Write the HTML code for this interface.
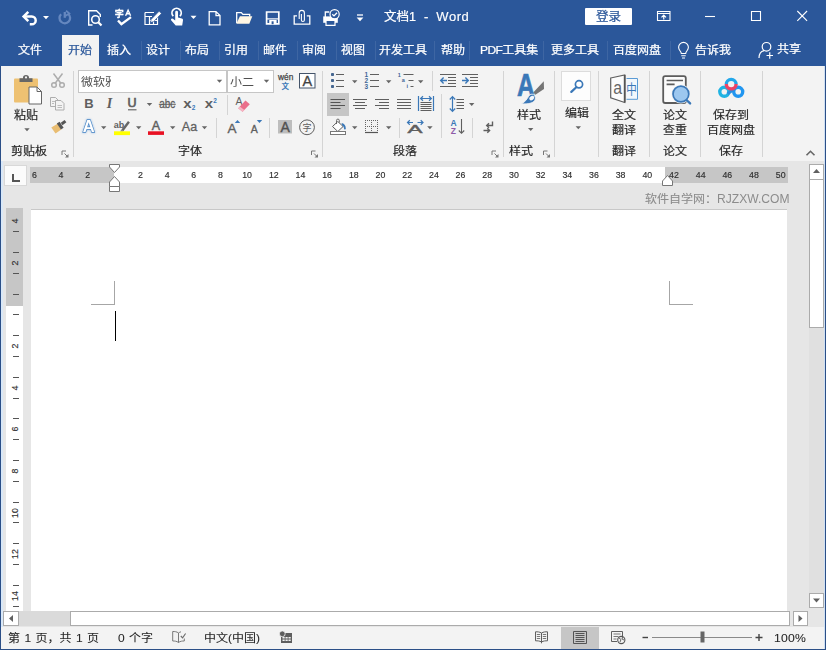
<!DOCTYPE html>
<html lang="zh-CN">
<head>
<meta charset="utf-8">
<title>文档1 - Word</title>
<style>
*{box-sizing:border-box;margin:0;padding:0}
html,body{width:826px;height:650px;overflow:hidden;background:#e6e6e6}
body{font-family:"Liberation Sans","Noto Sans CJK SC",sans-serif;font-size:12px;color:#262626;position:relative}
.a{position:absolute}
.t{position:absolute;white-space:nowrap;line-height:16px;height:16px;-webkit-text-stroke:0.25px;transform:scaleY(0.93)}
svg{position:absolute;overflow:visible}
#title{left:0;top:0;width:826px;height:66px;background:#2b579a}
#title .t{color:#fff;transform:scaleY(0.98)}
#ribbon{left:1px;top:66px;width:824px;height:95px;background:#f3f3f3}
#ribbon .t{color:#262626}
.sep{position:absolute;width:1px;background:#d4d4d4}
#status{left:0;top:627px;width:826px;height:23px;background:#f3f3f3}
#status .t{color:#262626;-webkit-text-stroke:0.08px}
#rl .t{-webkit-text-stroke:0.18px}
.rn{transform:none;-webkit-text-stroke:0.150px;font-size:8.800px;color:#2e2e2e;width:20px;text-align:center;line-height:12px;height:12px}
</style>
</head>
<body>
<!-- ===== TITLE BAR + TABS ===== -->
<div id="title" class="a">
  <div class="t" style="left:384px;top:9.300px;font-size:12.500px">文档1</div>
  <div class="t" style="left:424px;top:9.300px;font-size:13px">-</div>
  <div class="t" style="left:436.300px;top:9.300px;font-size:13px;letter-spacing:0.550px;-webkit-text-stroke:0.150px">Word</div>
  <div class="a" style="left:585px;top:8px;width:47px;height:17px;background:#fff;border-radius:1px"></div>
  <div class="t" style="left:596px;top:9px;font-size:12.5px;color:#2b579a">登录</div>
  <svg width="826" height="66" viewBox="0 0 826 66" style="left:0;top:0" fill="none" stroke="#fff" stroke-width="1.2">
    <!-- undo -->
    <path d="M25 16.500 H31.800 a3.900 3.900 0 0 1 0 7.800 H29.800" stroke-width="2.500"/>
    <path d="M28.300 11.800 L23.600 16.500 L28.300 21.200" stroke-width="2.500"/>
    <path d="M43 16 h6 l-3 3.200z" fill="#fff" stroke="none"/>
    <!-- redo (dim) -->
    <g stroke="#6587bf" stroke-width="2.300"><path d="M68.300 14 a5.300 5.300 0 1 1 -7.200 0.200"/><path d="M64.800 12 v5.800" /><path d="M66 10.800 l3.300 2.600 l-3.600 2.400" stroke-width="1.800"/></g>
    <!-- print preview -->
    <path d="M92.5 25 H88.7 V10.7 H96.5 L100.3 14.5 V17" stroke-width="1.4"/>
    <circle cx="95.5" cy="19.5" r="3.8" stroke-width="1.6"/><path d="M98.3 22.3 L101.5 25.5" stroke-width="2.2"/>
    <!-- spell check -->
    <path d="M118 20.500 l3.400 3.600 l9.600 -7" stroke-width="2.400"/>
    <path d="M125.600 15.800 l2.500 -5.500 l2.500 5.500 M126.600 13.800 h3" stroke-width="1.400"/>
    <!-- table edit -->
    <path d="M145 12.5 h9 M145 12.5 v12 h12.5 v-8 M145 16.5 h7 M149.5 16.5 v8 M153.5 20 v4.5 M149.5 20.5 h8" stroke-width="1.2"/>
    <path d="M151.300 19.300 l7.800 -8 l2.300 2.300 l-7.800 8 l-3.200 1z" fill="#fff" stroke="#2b579a" stroke-width="0.600"/>
    <!-- touch -->
    <path d="M173.300 16.200 a4.600 4.600 0 1 1 6.600 0" stroke-width="1.800"/>
    <path d="M175.2 12.2 a1.4 1.4 0 0 1 2.8 0 v5.3 l3.8 1 a1.6 1.6 0 0 1 1.2 1.8 l-0.8 5.2 h-6.5 l-4.6 -5.3 a1.2 1.2 0 0 1 1.8 -1.5 l2.3 1.8z" fill="#fff" stroke="none"/>
    <path d="M190.5 15.7 h6 l-3 3.2z" fill="#fff" stroke="none"/>
    <!-- new doc -->
    <path d="M209.2 11.6 h6.8 l4 4 v9.2 h-10.8z M216 11.6 v4 h4" stroke-width="1.3"/>
    <!-- open -->
    <path d="M236.7 23 V12.6 h4.6 l1.6 1.8 h6.8 v2.2" stroke-width="1.3"/>
    <path d="M236.300 23.700 l3.600 -7.400 h12.400 l-3 7.400z" fill="#fff6e3" stroke="none"/>
    <!-- save -->
    <path d="M266.600 12 h12.200 v11.800 h-12.200z" stroke-width="1.700"/>
    <path d="M267 18.900 h11.500" stroke-width="1.200"/>
    <path d="M269.200 20 h7.400 v4.200 h-7.400z" fill="#fff" stroke="none"/>
    <path d="M271.600 21.300 h2 v2.900 h-2z" fill="#2b579a" stroke="none"/>
    <!-- attach mail -->
    <path d="M297 15.8 h-2.8 v8.4 h15.6 v-8.4 h-3" stroke-width="1.3"/>
    <path d="M299.2 19 v-6 a2.6 2.6 0 0 1 5.2 0 v7 a1.5 1.5 0 0 1 -3 0 v-6" stroke-width="1.1"/>
    <!-- print check -->
    <path d="M325.3 17 v-5 h4" stroke-width="1.3"/>
    <path d="M323.2 16.4 h14.6 v6.4 h-14.6z" fill="#fff" stroke="none"/>
    <path d="M326 20.3 h9 v5 h-9z" fill="#2b579a" stroke="#fff" stroke-width="1.2"/>
    <circle cx="334.6" cy="14.2" r="4.6" fill="#2b579a" stroke="#fff" stroke-width="1.2"/>
    <path d="M332.3 14.2 l1.7 1.7 l3 -3.2" stroke-width="1.3"/>
    <!-- customize -->
    <path d="M357 15 h6" stroke-width="1.3"/><path d="M356.6 17.6 h6.8 l-3.4 3.6z" fill="#fff" stroke="none"/>
    <!-- window controls -->
    <path d="M657.500 11.500 h12.500 v9 h-12.500z M657.500 13.500 h12.500" stroke-width="1.100"/>
    <path d="M663.750 19.500 v-4 M661.500 17.300 l2.250 -2.300 l2.250 2.300" stroke-width="1.200"/>
    <path d="M705 16.500 h10" stroke-width="1.100"/>
    <path d="M751.500 11.500 h9 v9 h-9z" stroke-width="1.100"/>
    <path d="M797.300 11 l9.800 9.800 M807.100 11 l-9.800 9.800" stroke-width="1.100"/>
    <!-- bulb -->
    <path d="M681.3 53.500 c0 -2.200 -2.700 -3 -2.700 -6.200 a4.900 4.900 0 0 1 9.800 0 c0 3.200 -2.700 4 -2.700 6.200z M681.300 55.800 h4.400 M682 58 h3" stroke-width="1.100"/>
    <!-- share person -->
    <circle cx="766.500" cy="46.800" r="4.300" stroke-width="1.200"/>
    <path d="M759 58 c0 -4.500 2.500 -6.800 5 -7.400" stroke-width="1.200"/>
    <path d="M766.500 55.500 h6.500 M769.750 52.200 v6.600" stroke-width="1.200"/>
  </svg>
  <div class="t" style="left:114.800px;top:9.300px;font-size:9px;font-weight:700;line-height:10px;height:10px;-webkit-text-stroke:0.300px">字</div>
  <!-- tabs -->
  <div class="a" style="left:141px;top:41px;width:1px;height:19px;background:rgba(255,255,255,0.09)"></div><div class="a" style="left:180px;top:41px;width:1px;height:19px;background:rgba(255,255,255,0.09)"></div><div class="a" style="left:219px;top:41px;width:1px;height:19px;background:rgba(255,255,255,0.09)"></div><div class="a" style="left:258px;top:41px;width:1px;height:19px;background:rgba(255,255,255,0.09)"></div><div class="a" style="left:297px;top:41px;width:1px;height:19px;background:rgba(255,255,255,0.09)"></div><div class="a" style="left:336px;top:41px;width:1px;height:19px;background:rgba(255,255,255,0.09)"></div><div class="a" style="left:375px;top:41px;width:1px;height:19px;background:rgba(255,255,255,0.09)"></div><div class="a" style="left:434px;top:41px;width:1px;height:19px;background:rgba(255,255,255,0.09)"></div><div class="a" style="left:469px;top:41px;width:1px;height:19px;background:rgba(255,255,255,0.09)"></div><div class="a" style="left:543px;top:41px;width:1px;height:19px;background:rgba(255,255,255,0.09)"></div><div class="a" style="left:607px;top:41px;width:1px;height:19px;background:rgba(255,255,255,0.09)"></div><div class="a" style="left:670px;top:41px;width:1px;height:19px;background:rgba(255,255,255,0.09)"></div>
  <div class="a" style="left:62px;top:35px;width:37px;height:31px;background:#f3f3f3"></div>
  <div class="t" style="left:18px;top:42px">文件</div>
  <div class="t" style="left:68px;top:42px;color:#2b579a">开始</div>
  <div class="t" style="left:107px;top:42px">插入</div>
  <div class="t" style="left:146px;top:42px">设计</div>
  <div class="t" style="left:185px;top:42px">布局</div>
  <div class="t" style="left:224px;top:42px">引用</div>
  <div class="t" style="left:263px;top:42px">邮件</div>
  <div class="t" style="left:302px;top:42px">审阅</div>
  <div class="t" style="left:341px;top:42px">视图</div>
  <div class="t" style="left:379px;top:42px">开发工具</div>
  <div class="t" style="left:441px;top:42px">帮助</div>
  <div class="t" style="left:480px;top:42px"><span style="letter-spacing:-0.6px">PDF</span>工具集</div>
  <div class="t" style="left:551px;top:42px">更多工具</div>
  <div class="t" style="left:613px;top:42px">百度网盘</div>
  <div class="t" style="left:695px;top:42px">告诉我</div>
  <div class="t" style="left:777px;top:41px">共享</div>
</div>

<!-- ===== RIBBON ===== -->
<div id="ribbon" class="a"></div>
<div class="a" style="left:1px;top:161px;width:824px;height:1px;background:#d6d6d6"></div>
<div id="rl" class="a" style="left:0;top:0;width:826px;height:161px">
  <!-- group separators -->
  <div class="sep" style="left:73px;top:71px;height:86px"></div>
  <div class="sep" style="left:322px;top:71px;height:86px"></div>
  <div class="sep" style="left:503px;top:71px;height:86px"></div>
  <div class="sep" style="left:554px;top:71px;height:86px"></div>
  <div class="sep" style="left:598px;top:71px;height:86px"></div>
  <div class="sep" style="left:649px;top:71px;height:86px"></div>
  <div class="sep" style="left:700px;top:71px;height:86px"></div>
  <div class="sep" style="left:762px;top:71px;height:86px"></div>
  <!-- small separators -->
  <div class="sep" style="left:227px;top:95px;height:20px"></div>
  <div class="sep" style="left:216px;top:118px;height:20px"></div>
  <div class="sep" style="left:269px;top:118px;height:20px"></div>
  <div class="sep" style="left:432px;top:71px;height:20px"></div>
  <div class="sep" style="left:441px;top:94px;height:44px"></div>
  <div class="sep" style="left:399px;top:118px;height:20px"></div>
  <div class="sep" style="left:472px;top:118px;height:20px"></div>
  <!-- font boxes -->
  <div class="a" style="left:78px;top:70px;width:149px;height:23px;background:#fff;border:1px solid #c6c6c6"></div>
  <div class="a" style="left:227px;top:70px;width:47px;height:23px;background:#fff;border:1px solid #c6c6c6"></div>
  <div class="t" style="left:81px;top:74.300px;width:30px;overflow:hidden;color:#505050;-webkit-text-stroke:0">微软雅黑</div>
  <div class="t" style="left:230px;top:74.300px;color:#505050;-webkit-text-stroke:0">小二</div>
  <!-- align-left selected bg -->
  <div class="a" style="left:327px;top:93px;width:22px;height:23px;background:#c6c6c6"></div>
  <!-- edit box -->
  <div class="a" style="left:561px;top:71px;width:30px;height:30px;background:#fdfdfd;border:1px solid #dcdcdc"></div>
  <!-- labels -->
  <div class="t" style="left:14px;top:107.4px">粘贴</div>
  <div class="t" style="left:11px;top:143.4px">剪贴板</div>
  <div class="t" style="left:178px;top:143.4px">字体</div>
  <div class="t" style="left:393px;top:143.4px">段落</div>
  <div class="t" style="left:517px;top:107.4px">样式</div>
  <div class="t" style="left:509px;top:143.4px">样式</div>
  <div class="t" style="left:565px;top:105.4px">编辑</div>
  <div class="t" style="left:612px;top:107.4px">全文</div>
  <div class="t" style="left:612px;top:121.9px">翻译</div>
  <div class="t" style="left:612px;top:143.4px">翻译</div>
  <div class="t" style="left:663px;top:107.4px">论文</div>
  <div class="t" style="left:663px;top:121.9px">查重</div>
  <div class="t" style="left:663px;top:143.4px">论文</div>
  <div class="t" style="left:713px;top:107.4px">保存到</div>
  <div class="t" style="left:707px;top:121.9px">百度网盘</div>
  <div class="t" style="left:719px;top:143.4px">保存</div>
<!--RI-START-->
<svg width="826" height="161" viewBox="0 0 826 161" style="left:0;top:0" font-family="'Liberation Sans','Noto Sans CJK SC',sans-serif">
<rect x="14" y="78.500" width="24" height="24" rx="1" fill="#eec172"/>
<path d="M19.500 82 v-3.700 h3.500 v-0.700 a3 2.600 0 0 1 6 0 v0.700 h3.500 v3.700z" fill="#666"/><circle cx="26" cy="77.400" r="1.100" fill="#f3f3f3"/>
<path d="M29 87 h8 l4.500 4.500 v12.500 h-12.500z" fill="#fff" stroke="#666" stroke-width="1"/><path d="M37 87 v4.500 h4.500" fill="none" stroke="#666" stroke-width="1"/>
<path d="M24.3 128.3 h5.4 l-2.7 3z" fill="#666"/>
<path d="M62.0 155.0 v-4 h4" fill="none" stroke="#777" stroke-width="1"/><path d="M64.5 153.5 l3.2 3.2" stroke="#777" stroke-width="1" fill="none"/><path d="M68.5 154.0 v3.5 h-3.5z" fill="#777"/>
<g fill="none" stroke="#adadad" stroke-width="1.500"><path d="M53.500 73.500 l7.500 10 M62.500 73.500 l-7.500 10"/><circle cx="54" cy="85" r="2.300"/><circle cx="62" cy="85" r="2.300"/></g>
<g fill="#f3f3f3" stroke="#adadad" stroke-width="1"><path d="M50.500 97.500 h5 l2.500 2.500 v6.500 h-7.500z"/><path d="M55.500 100.500 h5.500 l3 3 v6.500 h-8.500z"/></g>
<path d="M52 101.500 h3 M52 103.500 h2 M57.500 105.500 h4.500 M57.500 107.500 h4.500" stroke="#bdbdbd" stroke-width="1" fill="none"/>
<path d="M51.300 127.500 l6.200 -3.800 l3.800 5.700 l-5.800 4.200z" fill="#e9bd72"/>
<path d="M56.800 123.600 l2.800 -1.800 l4 5.900 l-2.700 1.900z" fill="#555"/>
<path d="M60.800 122.800 l3.800 -2.900 l1.800 2.400 l-3.900 2.900z" fill="#555"/>
<path d="M216.8 79.8 h5.4 l-2.7 3z" fill="#666"/>
<path d="M263.8 79.8 h5.4 l-2.7 3z" fill="#666"/>
<text x="84.300" y="107.800" font-size="13" font-weight="700" fill="#5f5f5f">B</text>
<text x="106.800" y="107.800" font-size="14" font-weight="700" font-style="italic" font-family="'Liberation Serif',serif" fill="#5f5f5f">I</text>
<text x="127.400" y="107" font-size="12.500" fill="#5f5f5f" stroke="#5f5f5f" stroke-width="0.700">U</text><path d="M128 109.800 h8.500" stroke="#5f5f5f" stroke-width="1.100"/>
<path d="M146.8 103 h5.4 l-2.7 3z" fill="#666"/>
<text x="159.300" y="107.900" font-size="12" fill="#5f5f5f" stroke="#5f5f5f" stroke-width="0.300" textLength="16" lengthAdjust="spacingAndGlyphs">abc</text><path d="M158.800 104.300 h17" stroke="#5f5f5f" stroke-width="1"/>
<text transform="translate(183.200 107.800) scale(1.200 1)" font-size="12.500" font-weight="700" fill="#5f5f5f">x</text><text x="191.800" y="110" font-size="6.500" font-weight="700" fill="#3b78b8">2</text>
<text transform="translate(204.800 107.800) scale(1.200 1)" font-size="12.500" font-weight="700" fill="#5f5f5f">x</text><text x="213.300" y="102.500" font-size="6.500" font-weight="700" fill="#3b78b8">2</text>
<text x="235.500" y="104.800" font-size="10.500" fill="#5f5f5f">A</text>
<path d="M238.200 108.200 l7.300 -7.600 l4.300 3.600 l-7.200 7.600z" fill="#ea6f8b"/><path d="M238.200 108.200 l1.700 -1.800 l4.400 3.600 l-1.700 1.800z" fill="#f6b6c4"/>
<text x="82.800" y="132.300" font-size="16.500" font-weight="700" fill="#fff" stroke="#4a86c4" stroke-width="1.300" paint-order="stroke" style="filter:drop-shadow(0 0 1px #8fb8e4)">A</text>
<path d="M101 126.2 h5.4 l-2.7 3z" fill="#666"/>
<text x="113.800" y="127.500" font-size="9" font-weight="700" fill="#5f5f5f">ab</text>
<path d="M121.300 129.800 l6.700 -8.800 l1.900 1.500 l-6.600 8.800z" fill="#666"/><path d="M121.300 129.800 l-1.300 1.700 l2.500 0.200 l0.800 -0.800z" fill="#888"/>
<rect x="114" y="131.300" width="16" height="3.800" fill="#ffff00"/>
<path d="M136 126.2 h5.4 l-2.7 3z" fill="#666"/>
<text x="151.700" y="130" font-size="12.500" fill="#5f5f5f" stroke="#5f5f5f" stroke-width="0.450">A</text><rect x="148" y="131.300" width="16" height="3.600" fill="#e81123"/>
<path d="M170 126.2 h5.4 l-2.7 3z" fill="#666"/>
<text x="181.800" y="131" font-size="12.500" fill="#5f5f5f" stroke="#5f5f5f" stroke-width="0.300">Aa</text>
<path d="M201.8 126.2 h5.4 l-2.7 3z" fill="#666"/>
<text x="227.400" y="132.600" font-size="13.500" fill="#5f5f5f" stroke="#5f5f5f" stroke-width="0.350">A</text><path d="M234.800 123 l2.700 -3 l2.700 3z" fill="#3b78b8"/>
<text x="250.800" y="132.600" font-size="10.500" fill="#5f5f5f" stroke="#5f5f5f" stroke-width="0.350">A</text><path d="M256.800 120 h5.400 l-2.700 3z" fill="#3b78b8"/>
<rect x="278" y="120" width="14" height="13.500" fill="#bdbdbd"/><text x="280.400" y="131.800" font-size="14" fill="#505050" stroke="#505050" stroke-width="0.400">A</text>
<circle cx="307" cy="127.300" r="7.400" fill="none" stroke="#5f5f5f" stroke-width="1"/><text x="302.500" y="130.800" font-size="9" fill="#5f5f5f">字</text>
<text x="278" y="80.400" font-size="8.500" fill="#444" stroke="#444" stroke-width="0.250" textLength="15.300" lengthAdjust="spacingAndGlyphs">wén</text><text x="281.500" y="88.600" font-size="7.500" font-weight="700" fill="#3b78b8">文</text>
<rect x="299.500" y="73.500" width="15.500" height="14.500" fill="#fff" stroke="#44546a" stroke-width="1"/><text x="302.400" y="86.200" font-size="14.500" fill="#444" stroke="#444" stroke-width="0.300">A</text>
<path d="M311.5 155.0 v-4 h4" fill="none" stroke="#777" stroke-width="1"/><path d="M314 153.5 l3.2 3.2" stroke="#777" stroke-width="1" fill="none"/><path d="M318 154.0 v3.5 h-3.5z" fill="#777"/>
<rect x="331" y="73.0" width="3" height="3" rx="0.800" fill="#44658f"/>
<path d="M336 74.5 H344" stroke="#5f5f5f" stroke-width="1"/>
<rect x="331" y="79.0" width="3" height="3" rx="0.800" fill="#44658f"/>
<path d="M336 80.5 H344" stroke="#5f5f5f" stroke-width="1"/>
<rect x="331" y="85.0" width="3" height="3" rx="0.800" fill="#44658f"/>
<path d="M336 86.5 H344" stroke="#5f5f5f" stroke-width="1"/>
<path d="M352 80.2 h5.4 l-2.7 3z" fill="#666"/>
<text x="364.500" y="76.8" font-size="6.500" font-weight="700" fill="#3f6797">1</text>
<path d="M370 74.5 H379" stroke="#5f5f5f" stroke-width="1"/>
<text x="364.500" y="82.8" font-size="6.500" font-weight="700" fill="#3f6797">2</text>
<path d="M370 80.5 H379" stroke="#5f5f5f" stroke-width="1"/>
<text x="364.500" y="88.8" font-size="6.500" font-weight="700" fill="#3f6797">3</text>
<path d="M370 86.5 H379" stroke="#5f5f5f" stroke-width="1"/>
<path d="M386 80.2 h5.4 l-2.7 3z" fill="#666"/>
<text x="397.800" y="76.500" font-size="5.500" font-weight="700" fill="#3f6797">1</text><path d="M403.5 74.5 H413.5" stroke="#5f5f5f" stroke-width="1"/>
<text x="401.800" y="82.200" font-size="5.500" font-weight="700" fill="#3f6797">a</text><path d="M408.5 80.5 H413.5" stroke="#5f5f5f" stroke-width="1"/>
<text x="406.600" y="88.200" font-size="5.500" font-weight="700" fill="#3f6797">i</text><path d="M410.5 86.5 H413.5" stroke="#5f5f5f" stroke-width="1"/>
<path d="M418 80.2 h5.4 l-2.7 3z" fill="#666"/>
<path d="M440 74.5 H456" stroke="#5f5f5f" stroke-width="1"/><path d="M440 86.5 H456" stroke="#5f5f5f" stroke-width="1"/><path d="M448 77.5 H456" stroke="#5f5f5f" stroke-width="1"/><path d="M448 80.5 H456" stroke="#5f5f5f" stroke-width="1"/><path d="M448 83.5 H456" stroke="#5f5f5f" stroke-width="1"/><path d="M447 80.500 H440.8 M443.6 77.600 l-2.900 2.900 l2.900 2.900" fill="none" stroke="#3b78b8" stroke-width="1.400"/>
<path d="M462 74.5 H478" stroke="#5f5f5f" stroke-width="1"/><path d="M462 86.5 H478" stroke="#5f5f5f" stroke-width="1"/><path d="M470 77.5 H478" stroke="#5f5f5f" stroke-width="1"/><path d="M470 80.5 H478" stroke="#5f5f5f" stroke-width="1"/><path d="M470 83.5 H478" stroke="#5f5f5f" stroke-width="1"/><path d="M462 80.500 H468.2 M465.4 77.600 l2.900 2.900 l-2.900 2.900" fill="none" stroke="#3b78b8" stroke-width="1.400"/>
<path d="M330.5 99.5 H345" stroke="#555" stroke-width="1"/>
<path d="M353 99.5 H367" stroke="#5f5f5f" stroke-width="1"/>
<path d="M375 99.5 H389" stroke="#5f5f5f" stroke-width="1"/>
<path d="M397 99.5 H411" stroke="#5f5f5f" stroke-width="1"/>
<path d="M330.5 102.5 H340.5" stroke="#555" stroke-width="1"/>
<path d="M355 102.5 H365" stroke="#5f5f5f" stroke-width="1"/>
<path d="M379 102.5 H389" stroke="#5f5f5f" stroke-width="1"/>
<path d="M397 102.5 H411" stroke="#5f5f5f" stroke-width="1"/>
<path d="M330.5 105.5 H345" stroke="#555" stroke-width="1"/>
<path d="M353 105.5 H367" stroke="#5f5f5f" stroke-width="1"/>
<path d="M375 105.5 H389" stroke="#5f5f5f" stroke-width="1"/>
<path d="M397 105.5 H411" stroke="#5f5f5f" stroke-width="1"/>
<path d="M330.5 108.5 H340.5" stroke="#555" stroke-width="1"/>
<path d="M355 108.5 H365" stroke="#5f5f5f" stroke-width="1"/>
<path d="M379 108.5 H389" stroke="#5f5f5f" stroke-width="1"/>
<path d="M397 108.5 H411" stroke="#5f5f5f" stroke-width="1"/>
<path d="M418.500 96 V111 M433.500 96 V111" stroke="#3b78b8" stroke-width="1.200"/>
<path d="M420.500 98.500 H431.500 M423 96.200 l-2.400 2.300 l2.400 2.300 M429 96.200 l2.400 2.300 l-2.400 2.300" fill="none" stroke="#3b78b8" stroke-width="1.200"/>
<path d="M420.5 102.5 H431.5" stroke="#5f5f5f" stroke-width="1"/>
<path d="M420.5 104.5 H431.5" stroke="#5f5f5f" stroke-width="1"/>
<path d="M420.5 106.5 H431.5" stroke="#5f5f5f" stroke-width="1"/>
<path d="M420.5 108.5 H431.5" stroke="#5f5f5f" stroke-width="1"/>
<path d="M420.5 110.5 H431.5" stroke="#5f5f5f" stroke-width="1"/>
<path d="M452.500 96.800 V111.200 M449.800 99.500 l2.700 -2.800 l2.700 2.800 M449.800 108.500 l2.700 2.800 l2.700 -2.800" fill="none" stroke="#3b78b8" stroke-width="1.200"/>
<path d="M456.5 99.5 H464" stroke="#5f5f5f" stroke-width="1"/>
<path d="M456.5 102.5 H464" stroke="#5f5f5f" stroke-width="1"/>
<path d="M456.5 105.5 H464" stroke="#5f5f5f" stroke-width="1"/>
<path d="M456.5 108.5 H464" stroke="#5f5f5f" stroke-width="1"/>
<path d="M469 103 h5.4 l-2.7 3z" fill="#666"/>
<path d="M337.800 121.500 l5.300 5 l-5.300 5 l-5.300 -5z" fill="#fff" stroke="#5f5f5f" stroke-width="1"/>
<path d="M336.500 124 v-3.500 a1.400 1.400 0 0 1 2.800 0 v2" fill="none" stroke="#5f5f5f" stroke-width="0.900"/>
<path d="M341.500 123 c2.500 0.300 4.300 2.300 4.300 5.500 c0 1.300 -1.800 1.300 -1.800 0 c0 -1.500 -0.800 -2.500 -1.700 -3z" fill="#3b78b8"/>
<rect x="330.500" y="131.500" width="15" height="3" fill="#fff" stroke="#777" stroke-width="1"/>
<path d="M352 126.2 h5.4 l-2.7 3z" fill="#666"/>
<path d="M365 120.500 H378 M365 126.500 H378 M365.500 120 V132 M371.500 120 V132 M377.500 120 V132" fill="none" stroke="#666" stroke-width="1" stroke-dasharray="1 1"/>
<path d="M365 132.5 H378" stroke="#555" stroke-width="1.2"/>
<path d="M386 126.2 h5.4 l-2.7 3z" fill="#666"/>
<text x="407.500" y="133" font-size="11" fill="#5f5f5f" textLength="15" lengthAdjust="spacingAndGlyphs" stroke="#5f5f5f" stroke-width="0.400">A</text>
<path d="M407.500 122.500 H413 M409.800 120.300 l-2.300 2.200 l2.300 2.200 M417.500 122.500 H423 M420.700 120.300 l2.300 2.200 l-2.300 2.200" fill="none" stroke="#3b78b8" stroke-width="1.200"/>
<path d="M427.2 126.2 h5.4 l-2.7 3z" fill="#666"/>
<text x="450.500" y="125.600" font-size="8.500" font-weight="700" fill="#3b78b8">A</text><text x="450.800" y="134" font-size="8.500" font-weight="700" fill="#8e5ba8">Z</text>
<path d="M461.500 119 V133.300 M458.800 130.500 l2.700 2.800 l2.700 -2.800" fill="none" stroke="#5f5f5f" stroke-width="1.100"/>
<path d="M492.500 121.500 v4 h-5.500 M489 123.300 l-2.300 2.200 l2.300 2.200" fill="none" stroke="#5f5f5f" stroke-width="1.400"/>
<path d="M483.500 130.500 h6 M487.300 128.300 l2.300 2.200 l-2.300 2.200" fill="none" stroke="#5f5f5f" stroke-width="1.400"/>
<path d="M492.0 155.0 v-4 h4" fill="none" stroke="#777" stroke-width="1"/><path d="M494.5 153.5 l3.2 3.2" stroke="#777" stroke-width="1" fill="none"/><path d="M498.5 154.0 v3.5 h-3.5z" fill="#777"/>
<text transform="translate(517 95.600) scale(0.860 1.080)" font-size="28.500" font-weight="700" fill="#3a78b8" stroke="#3a78b8" stroke-width="0.600">A</text>
<path d="M543.800 81.300 l0.200 7.800 l-8.600 5.700 l-2.200 -2.400z" fill="#757575"/>
<path d="M521.300 103.800 c4 -1.800 5.500 -4.500 7.200 -7.300 c1.300 -2.200 3.300 -3 5 -1.800 c2.300 1.500 2.500 4 1 6 c-1.800 2.400 -6 3.600 -13.200 3.100z" fill="#3a78b8" stroke="#f3f3f3" stroke-width="0.900"/>
<ellipse cx="531.800" cy="98" rx="2.700" ry="2" fill="#f3f7fb" transform="rotate(-35 531.900 98.100)"/>
<path d="M528 128 h5.4 l-2.7 3z" fill="#666"/>
<path d="M543.5 155.0 v-4 h4" fill="none" stroke="#777" stroke-width="1"/><path d="M546 153.5 l3.2 3.2" stroke="#777" stroke-width="1" fill="none"/><path d="M550 154.0 v3.5 h-3.5z" fill="#777"/>
<circle cx="579" cy="84.300" r="3.600" fill="#fff" stroke="#3b78b8" stroke-width="1.700"/><path d="M576.300 87.300 l-5 4.600" stroke="#3b78b8" stroke-width="2.200" stroke-linecap="round"/>
<path d="M575.6 126.3 h5.4 l-2.7 3z" fill="#666"/>
<path d="M610.700 78 l14 -3 v27.500 l-14 -4.800z" fill="#fcfcfc" stroke="#5f5f5f" stroke-width="1.200"/>
<path d="M624.700 75 v27.500" stroke="#555" stroke-width="1.800"/>
<text x="613.300" y="93.600" font-size="17.500" fill="#666" textLength="8.800" lengthAdjust="spacingAndGlyphs">a</text>
<path d="M626.500 78.500 h11 v20.800 h-11" fill="#f2f7fc" stroke="#5b9bd5" stroke-width="1"/>
<text transform="translate(626.200 93.600) scale(0.920 1.150)" font-size="11.500" fill="#3b78b8">中</text>
<rect x="663.200" y="76.200" width="22.600" height="26.800" rx="2" fill="#fbfbfb" stroke="#5c5c5c" stroke-width="1.800"/>
<path d="M666.600 80.500 h16.400 M666.600 84.400 h8" stroke="#5c5c5c" stroke-width="1.600"/>
<circle cx="680.900" cy="94" r="9.600" fill="#f3f3f3"/>
<path d="M686.500 100 l3.600 3.400" stroke="#3b78b8" stroke-width="2.400" stroke-linecap="round"/>
<circle cx="680.900" cy="94" r="7.900" fill="#9cc7ef" stroke="#3b78b8" stroke-width="1.700"/>
<g fill="none" stroke-width="3.400"><circle cx="724.300" cy="91.800" r="4.500" stroke="#1fb3e3"/><circle cx="738.200" cy="91.800" r="4.500" stroke="#2196f0"/><path d="M727.500 93.800 l7.500 -5.300" stroke="#2a8fe0" stroke-width="3"/><path d="M726.300 84.300 a4.900 4.900 0 0 1 9.800 0" stroke="#22a7ea"/><path d="M726.300 84 a4.900 4.900 0 0 0 9.800 0" stroke="#ee4466"/></g>
<path d="M806.500 155.300 l4 -4 l4 4" fill="none" stroke="#666" stroke-width="1.600"/>
</svg>
<!--RI-END-->
</div>

<!-- ===== RULER / DOC ===== -->
<!--DOC-START-->
<div id="doc" class="a" style="left:0;top:161px;width:826px;height:466px;background:#e6e6e6"></div>
<div id="dl" class="a" style="left:0;top:0;width:826px;height:650px">
<div class="a" style="left:4px;top:165px;width:23px;height:21px;background:#fbfbfb;border:1px solid #d8d8d8"></div>
<div class="a" style="left:12px;top:174px;width:8px;height:8px;border-left:2px solid #555;border-bottom:2px solid #555"></div>
<div class="a" style="left:30px;top:167px;width:758px;height:16px;background:#fff"></div>
<div class="a" style="left:30px;top:167px;width:84px;height:16px;background:#c6c6c6"></div>
<div class="a" style="left:665px;top:167px;width:123px;height:16px;background:#c6c6c6"></div>
<div class="t rn" style="left:24.5px;top:169.200px;transform:scaleY(0.990)">6</div>
<div class="t rn" style="left:51.0px;top:169.200px;transform:scaleY(0.990)">4</div>
<div class="t rn" style="left:77.6px;top:169.200px;transform:scaleY(0.990)">2</div>
<div class="t rn" style="left:130.4px;top:169.200px;transform:scaleY(0.990)">2</div>
<div class="t rn" style="left:157.1px;top:169.200px;transform:scaleY(0.990)">4</div>
<div class="t rn" style="left:183.7px;top:169.200px;transform:scaleY(0.990)">6</div>
<div class="t rn" style="left:210.4px;top:169.200px;transform:scaleY(0.990)">8</div>
<div class="t rn" style="left:237.1px;top:169.200px;transform:scaleY(0.990)">10</div>
<div class="t rn" style="left:263.8px;top:169.200px;transform:scaleY(0.990)">12</div>
<div class="t rn" style="left:290.5px;top:169.200px;transform:scaleY(0.990)">14</div>
<div class="t rn" style="left:317.1px;top:169.200px;transform:scaleY(0.990)">16</div>
<div class="t rn" style="left:343.8px;top:169.200px;transform:scaleY(0.990)">18</div>
<div class="t rn" style="left:370.5px;top:169.200px;transform:scaleY(0.990)">20</div>
<div class="t rn" style="left:397.2px;top:169.200px;transform:scaleY(0.990)">22</div>
<div class="t rn" style="left:423.9px;top:169.200px;transform:scaleY(0.990)">24</div>
<div class="t rn" style="left:450.5px;top:169.200px;transform:scaleY(0.990)">26</div>
<div class="t rn" style="left:477.2px;top:169.200px;transform:scaleY(0.990)">28</div>
<div class="t rn" style="left:503.9px;top:169.200px;transform:scaleY(0.990)">30</div>
<div class="t rn" style="left:530.6px;top:169.200px;transform:scaleY(0.990)">32</div>
<div class="t rn" style="left:557.3px;top:169.200px;transform:scaleY(0.990)">34</div>
<div class="t rn" style="left:583.9px;top:169.200px;transform:scaleY(0.990)">36</div>
<div class="t rn" style="left:610.6px;top:169.200px;transform:scaleY(0.990)">38</div>
<div class="t rn" style="left:637.3px;top:169.200px;transform:scaleY(0.990)">40</div>
<div class="t rn" style="left:664.0px;top:169.200px;transform:scaleY(0.990)">42</div>
<div class="t rn" style="left:690.7px;top:169.200px;transform:scaleY(0.990)">44</div>
<div class="t rn" style="left:717.3px;top:169.200px;transform:scaleY(0.990)">46</div>
<div class="t rn" style="left:744.0px;top:169.200px;transform:scaleY(0.990)">48</div>
<div class="t rn" style="left:770.7px;top:169.200px;transform:scaleY(0.990)">50</div>
<svg width="826" height="40" viewBox="0 161 826 40" style="left:0;top:161px"><path d="M109.500 164.500 h10 v2.500 l-5 5.500 l-5 -5.500z" fill="#fff" stroke="#777" stroke-width="1"/><path d="M109.500 186.500 v-4.500 l5 -5.500 l5 5.500 v4.500z" fill="#fff" stroke="#777" stroke-width="1"/><path d="M109.500 186.500 h10 v5 h-10z" fill="#fff" stroke="#777" stroke-width="1"/><path d="M662.500 185.500 v-4.500 l5 -5.500 l5 5.500 v4.500z" fill="#fff" stroke="#777" stroke-width="1"/></svg>
<div class="t" style="left:645px;top:191.300px;font-size:12px;color:#8c8c8c;-webkit-text-stroke:0.1px;transform:scaleY(0.990)">软件自学网：</div>
<div class="t" style="left:717.300px;top:191.200px;font-size:13.500px;color:#8c8c8c;-webkit-text-stroke:0;transform:scaleX(0.895);transform-origin:0 50%">RJZXW.COM</div>
<div class="a" style="left:31px;top:209px;width:756px;height:402px;background:#fff;border-top:1px solid #c8c8c8"></div>
<div class="a" style="left:6px;top:208px;width:17px;height:403px;background:#fff"></div>
<div class="a" style="left:6px;top:208px;width:17px;height:98px;background:#c6c6c6"></div>
<div class="a" style="left:13px;top:231px;width:6px;height:1px;background:#555"></div>
<div class="a" style="left:13px;top:252px;width:6px;height:1px;background:#555"></div>
<div class="a" style="left:13px;top:273px;width:6px;height:1px;background:#555"></div>
<div class="a" style="left:13px;top:294px;width:6px;height:1px;background:#555"></div>
<div class="a" style="left:13px;top:314px;width:6px;height:1px;background:#555"></div>
<div class="a" style="left:13px;top:335px;width:6px;height:1px;background:#555"></div>
<div class="a" style="left:13px;top:356px;width:6px;height:1px;background:#555"></div>
<div class="a" style="left:13px;top:377px;width:6px;height:1px;background:#555"></div>
<div class="a" style="left:13px;top:398px;width:6px;height:1px;background:#555"></div>
<div class="a" style="left:13px;top:418px;width:6px;height:1px;background:#555"></div>
<div class="a" style="left:13px;top:439px;width:6px;height:1px;background:#555"></div>
<div class="a" style="left:13px;top:460px;width:6px;height:1px;background:#555"></div>
<div class="a" style="left:13px;top:481px;width:6px;height:1px;background:#555"></div>
<div class="a" style="left:13px;top:502px;width:6px;height:1px;background:#555"></div>
<div class="a" style="left:13px;top:522px;width:6px;height:1px;background:#555"></div>
<div class="a" style="left:13px;top:543px;width:6px;height:1px;background:#555"></div>
<div class="a" style="left:13px;top:564px;width:6px;height:1px;background:#555"></div>
<div class="a" style="left:13px;top:585px;width:6px;height:1px;background:#555"></div>
<div class="a" style="left:13px;top:606px;width:6px;height:1px;background:#555"></div>
<div class="t rn" style="left:4.5px;top:215.3px;width:20px;text-align:center;transform:rotate(-90deg)">4</div>
<div class="t rn" style="left:4.5px;top:256.9px;width:20px;text-align:center;transform:rotate(-90deg)">2</div>
<div class="t rn" style="left:4.5px;top:340.1px;width:20px;text-align:center;transform:rotate(-90deg)">2</div>
<div class="t rn" style="left:4.5px;top:381.7px;width:20px;text-align:center;transform:rotate(-90deg)">4</div>
<div class="t rn" style="left:4.5px;top:423.3px;width:20px;text-align:center;transform:rotate(-90deg)">6</div>
<div class="t rn" style="left:4.5px;top:464.9px;width:20px;text-align:center;transform:rotate(-90deg)">8</div>
<div class="t rn" style="left:4.5px;top:506.5px;width:20px;text-align:center;transform:rotate(-90deg)">10</div>
<div class="t rn" style="left:4.5px;top:548.1px;width:20px;text-align:center;transform:rotate(-90deg)">12</div>
<div class="t rn" style="left:4.5px;top:589.7px;width:20px;text-align:center;transform:rotate(-90deg)">14</div>
<div class="a" style="left:91px;top:304px;width:24px;height:1px;background:#a6a6a6"></div>
<div class="a" style="left:114px;top:281px;width:1px;height:24px;background:#a6a6a6"></div>
<div class="a" style="left:669px;top:304px;width:24px;height:1px;background:#a6a6a6"></div>
<div class="a" style="left:669px;top:281px;width:1px;height:24px;background:#a6a6a6"></div>
<div class="a" style="left:115px;top:311px;width:1px;height:30px;background:#000"></div>
<div class="a" style="left:809px;top:179px;width:15px;height:415px;background:#e0e0e0"></div>
<div class="a" style="left:809px;top:164px;width:15px;height:16px;background:#fff;border:1px solid #ababab"></div>
<div class="a" style="left:809px;top:179px;width:15px;height:149px;background:#fff;border:1px solid #ababab"></div>
<div class="a" style="left:809px;top:593px;width:15px;height:15px;background:#fff;border:1px solid #ababab"></div>
<div class="a" style="left:18px;top:611px;width:53px;height:15px;background:#dadada"></div>
<div class="a" style="left:3px;top:611px;width:16px;height:15px;background:#fff;border:1px solid #ababab"></div>
<div class="a" style="left:70px;top:611px;width:720px;height:15px;background:#fff;border:1px solid #ababab"></div>
<div class="a" style="left:793px;top:611px;width:15px;height:15px;background:#fff;border:1px solid #ababab"></div>
<svg width="826" height="650" viewBox="0 0 826 650" style="left:0;top:0"><path d="M813 173 l3.500 -4 l3.500 4z" fill="#606060"/><path d="M813 598.500 l3.500 4 l3.500 -4z" fill="#606060"/><path d="M13 615 l-4 3.500 l4 3.500z" fill="#606060"/><path d="M798.500 615 l4 3.500 l-4 3.500z" fill="#606060"/></svg>
</div>
<!--DOC-END-->

<!-- ===== STATUS BAR ===== -->
<div id="status" class="a">
  <div class="a" style="left:561px;top:0;width:38px;height:23px;background:#c6c6c6"></div>
  <div class="t" style="left:8px;top:3px;word-spacing:1.1px">第 1 页，共 1 页</div>
  <div class="t" style="left:118px;top:3px;word-spacing:1px">0 个字</div>
  <div class="t" style="left:204px;top:3px">中文(中国)</div>
  <div class="t" style="left:774px;top:3px;font-size:12.200px;letter-spacing:0.200px">100%</div>
  <svg width="826" height="23" viewBox="0 627 826 23" style="left:0;top:0" fill="none" stroke="#5f5f5f" stroke-width="1">
    <!-- proofing -->
    <path d="M178.500 633 c-1.800 -1.400 -3.800 -1.500 -5.800 -1.500 v9.500 c2 0 4 0.100 5.800 1.500 c1.800 -1.400 3.800 -1.500 5.800 -1.500 v-2.500 M178.500 633 v9.500 M178.500 633 c0.800 -0.600 1.600 -1 2.500 -1.200" stroke="#7a7a7a" stroke-width="1"/>
    <path d="M180.800 636 l1.800 1.900 l3 -4.400" stroke="#6a6a6a" stroke-width="1.100"/>
    <!-- macro -->
    <path d="M281 633 h11 v10 h-11z" fill="#5f5f5f" stroke="none"/>
    <path d="M282.500 637 h2.200 v1.500 h-2.200z M285.500 637 h2.200 v1.500 h-2.200z M288.500 637 h2.200 v1.500 h-2.200z M282.500 639.500 h2.200 v1.500 h-2.200z M285.500 639.500 h2.200 v1.500 h-2.200z M288.500 639.500 h2.200 v1.500 h-2.200z" fill="#f3f3f3" stroke="none"/>
    <circle cx="282.300" cy="633.800" r="2.900" fill="#5f5f5f" stroke="#f3f3f3" stroke-width="0.800"/>
    <!-- read mode -->
    <path d="M541.500 633 c-2 -1.200 -4 -1.200 -6 -1.200 v9 c2 0 4 0 6 1.200 c2 -1.200 4 -1.200 6 -1.200 v-9 c-2 0 -4 0 -6 1.200z M541.500 633 v10.300" stroke="#5f5f5f"/>
    <path d="M536.800 634.500 h3.400 M536.800 636.500 h3.400 M536.800 638.500 h3.400 M542.800 634.500 h3.400 M542.800 636.500 h3.400 M542.800 638.500 h3.400" stroke="#6a6a6a" stroke-width="0.900"/>
    <!-- print layout -->
    <path d="M573.500 631.500 h13 v12 h-13z" stroke="#555"/>
    <path d="M575.500 634 h9 M575.500 636 h9 M575.500 638 h9 M575.500 640 h9 M575.500 642 h9" stroke="#555" stroke-width="1" transform="translate(0 -0.500)"/>
    <!-- web layout -->
    <path d="M617 641.500 h-5.500 v-10 h11 v4.500" stroke="#5f5f5f"/>
    <path d="M613.500 634 h7 M613.500 636.500 h5 M613.500 639 h3" stroke="#6a6a6a" stroke-width="0.900"/>
    <circle cx="621.300" cy="640" r="3.600" fill="#f3f3f3" stroke="#555" stroke-width="1.100"/>
    <path d="M619 638 l2 1.500 l-1 2.500 M622.500 637 l-0.500 2 l2 1" stroke="#555" stroke-width="0.900"/>
    <!-- zoom slider -->
    <path d="M642.500 637.500 h5.500" stroke="#444" stroke-width="1.400"/>
    <path d="M652 637.500 h100" stroke="#8a8a8a" stroke-width="1"/>
    <path d="M700.500 631.500 h4 v11 h-4z" fill="#666" stroke="none"/>
    <path d="M755.500 637.500 h7 M759 634 v7" stroke="#444" stroke-width="1.400"/>
  </svg>
</div>
<div class="a" style="left:1px;top:161px;width:2px;height:466px;background:#d9e8f8"></div>
<div class="a" style="left:824px;top:66px;width:1px;height:584px;background:#cfe0f3"></div>
<div class="a" style="left:0;top:66px;width:1px;height:584px;background:#2b4f87"></div>
<div class="a" style="left:825px;top:66px;width:1px;height:584px;background:#2b4f87"></div>
<div class="a" style="left:0;top:649px;width:826px;height:1px;background:#2b4f87"></div>
</body>
</html>
